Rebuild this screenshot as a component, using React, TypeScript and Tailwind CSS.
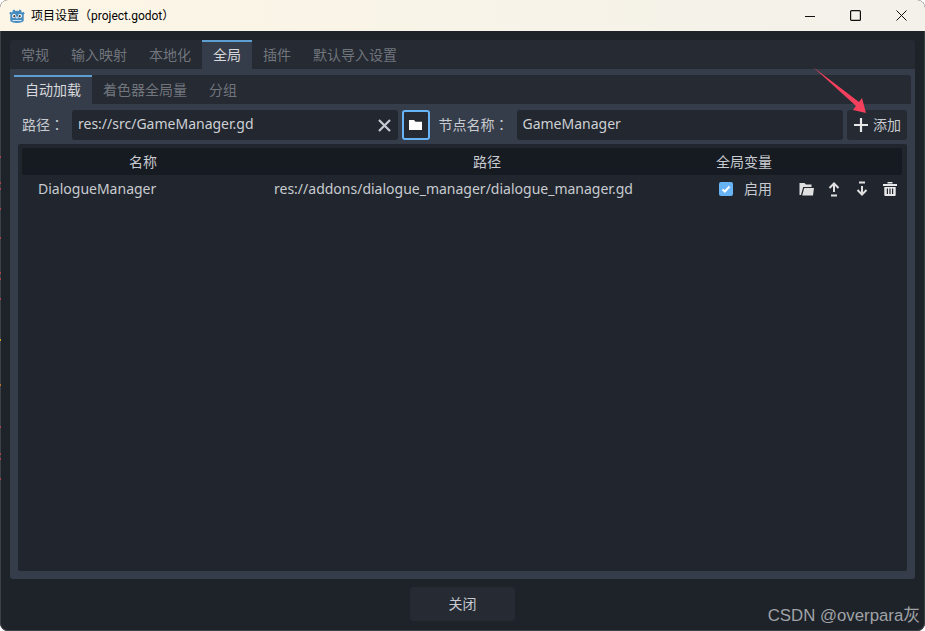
const topTabs = ["常规", "输入映射", "本地化", "全局", "插件", "默认导入设置"];
const subTabs = ["自动加载", "着色器全局量", "分组"];
const edgeMarks = [
  { y: 156, color: "#a8444c" },
  { y: 182, color: "#a8444c" },
  { y: 188, color: "#a8444c" },
  { y: 208, color: "#a8444c" },
  { y: 237, color: "#a8444c" },
  { y: 272, color: "#a8444c" },
  { y: 278, color: "#a8444c" },
  { y: 298, color: "#a8444c" },
  { y: 339, color: "#c9a227" },
  { y: 384, color: "#b8752a" },
  { y: 426, color: "#a8444c" },
  { y: 453, color: "#a8444c" },
  { y: 458, color: "#a8444c" },
  { y: 478, color: "#a8444c" },
];

function GodotLogo() {
  return (
    <svg width="16" height="16" viewBox="0 0 16 16">
      <path
        d="M5.500 1.500 6.300 3a8 8 0 0 1 3.400 0l.8-1.500 1.800.7.100 1.700.9.700 1.300-.9 1.100 1.500-1 1.200V13c-1.500 1.200-3.500 2-6.700 2S2.800 14.200 1.300 13V6.400L.3 5.200l1.100-1.500 1.300.9.900-.7.100-1.700z"
        fill="#478cbf"
      />
      <circle cx="5" cy="8" r="2" fill="#fff" />
      <circle cx="11" cy="8" r="2" fill="#fff" />
      <circle cx="5.300" cy="8.200" r="1.100" fill="#414042" />
      <circle cx="10.700" cy="8.200" r="1.100" fill="#414042" />
      <rect x="7.300" y="8.500" width="1.400" height="2" fill="#fff" />
      <path d="M3.500 12h9v.9h-9z" fill="#d5e6f3" />
    </svg>
  );
}

function FolderClosed() {
  return (
    <svg width="15" height="14" viewBox="0 0 15 14" fill="#fff">
      <path d="M1 2h5l1.500 1.800H14V12H1z" />
    </svg>
  );
}

function FolderOpen() {
  return (
    <svg width="15" height="14" viewBox="0 0 15 14" fill="#e0e0e0">
      <path d="M.5 1h5l1.500 1.500h5.500V5H4.200L2 13H.5zM5.200 6H15l-1 7.500H3.200z" />
    </svg>
  );
}

function ArrowUp() {
  return (
    <svg width="14" height="16" viewBox="0 0 14 16" fill="none" stroke="#e0e0e0" strokeWidth="2">
      <path d="M7 11V2.500M2.500 7 7 2.500 11.500 7M4 14.500h6" />
    </svg>
  );
}

function ArrowDown() {
  return (
    <svg width="14" height="16" viewBox="0 0 14 16" fill="none" stroke="#e0e0e0" strokeWidth="2">
      <path d="M7 5v8.500M2.500 9 7 13.500 11.500 9M4 1.500h6" />
    </svg>
  );
}

function Trash() {
  return (
    <svg width="14" height="14" viewBox="0 0 14 14" fill="#e8e8e8">
      <path
        d="M0 2h14v2H0zM4.500 0h5v1.500h-5zM1.300 5h11.400v8a1 1 0 0 1-1 1H2.300a1 1 0 0 1-1-1zM3.800 6.500v5.500H5V6.500zM6.400 6.500v5.500h1.200V6.500zM9 6.500v5.500h1.200V6.500z"
        fillRule="evenodd"
      />
    </svg>
  );
}

function App() {
  return (
    <div className="relative flex h-[631px] w-[925px] flex-col overflow-hidden rounded-lg bg-[#1e2229] font-['Noto_Sans','Noto_Sans_CJK_SC',sans-serif] text-[14px] text-[#c8cbd0] shadow-[inset_0_0_0_1px_#3c4047]">
      <div className="flex h-[31px] shrink-0 items-center bg-gradient-to-r from-[#fdf6e6] to-[#f3f1ea] font-['Roboto','Noto_Sans_CJK_SC',sans-serif] text-black">
        <div className="ml-[9px] mr-[6px]">
          <GodotLogo />
        </div>
        <span className="text-[12px]">项目设置（project.godot）</span>
        <div className="ml-auto flex items-center pr-[1.500px]">
          <div className="flex w-[45px] justify-center">
            <svg width="10" height="10" viewBox="0 0 10 10" stroke="#111">
              <path d="M0 5.500h10" />
            </svg>
          </div>
          <div className="flex w-[45px] justify-center">
            <svg width="11" height="11" viewBox="0 0 11 11" fill="none" stroke="#111" strokeWidth="1.200">
              <rect x=".6" y=".6" width="9.800" height="9.800" rx="1" />
            </svg>
          </div>
          <div className="ml-[1px] flex w-[45px] justify-center">
            <svg width="11" height="11" viewBox="0 0 11 11" stroke="#111">
              <path d="m.5.500 10 10M10.500.500l-10 10" />
            </svg>
          </div>
        </div>
      </div>

      <div className="mx-[10px] mt-[9px] flex h-[29px] shrink-0 items-stretch rounded-t-[3px] bg-[#252a33] text-[#71757c]">
        {topTabs.map((tab) => (
          <div
            key={tab}
            className={
              tab === "全局"
                ? "border-t-2 border-[#5d9fd2] bg-[#363d4a] px-[11px] pt-[2px] text-[#d6d8db]"
                : "px-[11px] pt-[4px]"
            }
          >
            {tab}
          </div>
        ))}
      </div>

      <div className="mx-[10px] flex h-[510px] shrink-0 flex-col rounded-b-[3px] bg-[#363d4a] px-[4px] pt-[6px]">
        <div className="flex h-[29px] shrink-0 items-stretch rounded-t-[3px] bg-[#252a33] text-[#71757c]">
          {subTabs.map((tab) => (
            <div
              key={tab}
              className={
                tab === "自动加载"
                  ? "border-t-2 border-[#5d9fd2] bg-[#363d4a] px-[11px] pt-[2px] text-[#d6d8db]"
                  : "px-[11px] pt-[4px]"
              }
            >
              {tab}
            </div>
          ))}
        </div>

        <div className="mt-[6px] flex h-[30px] shrink-0 items-center pl-[8px] pr-[4px]">
          <span className="mr-[8px] whitespace-nowrap pb-[1px]">
            路径<span className="font-['Noto_Sans_CJK_TC']">：</span>
          </span>
          <div className="flex h-[30px] w-[326px] items-center justify-between rounded-[3px] bg-[#222730] pl-[6px] pr-[7px] text-[#ced0d4]">
            <span className="pb-[3px]">res://src/GameManager.gd</span>
            <svg width="13" height="13" viewBox="0 0 13 13" stroke="#c8cbd0" strokeWidth="2.200">
              <path d="m1 1 11 11M12 1 1 12" />
            </svg>
          </div>
          <div className="ml-[4px] flex h-[30px] w-[28px] items-center justify-center rounded-[3px] border-2 border-[#66b3f5] bg-[#252a33]">
            <FolderClosed />
          </div>
          <span className="ml-[8px] w-[79px] whitespace-nowrap pb-[1px] pl-[1px]">
            节点名称<span className="font-['Noto_Sans_CJK_TC']">：</span>
          </span>
          <div className="ml-[1px] flex h-[30px] w-[326px] items-center rounded-[3px] bg-[#222730] pb-[3px] pl-[5px] text-[#ced0d4]">
            GameManager
          </div>
          <div className="ml-[4px] flex h-[30px] w-[60px] items-center rounded-[3px] bg-[#252a33] pl-[6px]">
            <svg width="16" height="16" viewBox="0 0 16 16" stroke="#e8e8e8" strokeWidth="2.200">
              <path d="M8 1v14M1 8h14" />
            </svg>
            <span className="ml-[4px] pb-[1px]">添加</span>
          </div>
        </div>

        <div className="mx-[4px] mb-[8px] mt-[4px] flex-1 rounded-[2px] bg-[#21262e] p-[4px] pr-[5px]">
          <div className="grid h-[27px] grid-cols-[242px_446px_68px_1fr] items-center rounded-[2px] bg-[#161a21] text-center">
            <span>名称</span>
            <span>路径</span>
            <span>全局变量</span>
            <span />
          </div>
          <div className="grid h-[28px] grid-cols-[242px_446px_68px_1fr] items-center">
            <span className="pb-[2px] pl-[16px]">DialogueManager</span>
            <span className="pb-[2px] pl-[10px]">res://addons/dialogue_manager/dialogue_manager.gd</span>
            <div className="flex items-center pl-[9px]">
              <div className="flex h-[14px] w-[14px] shrink-0 items-center justify-center rounded-[2px] bg-[#66b3f5]">
                <svg width="10" height="10" viewBox="0 0 10 10" fill="none" stroke="#fff" strokeWidth="2">
                  <path d="m1.500 5.500 2.300 2L8.500 2.500" />
                </svg>
              </div>
              <span className="ml-[11px] whitespace-nowrap pb-[2px]">启用</span>
            </div>
            <div className="flex items-center pl-[14px]">
              <div className="flex w-[28px] shrink-0 justify-center">
                <FolderOpen />
              </div>
              <div className="flex w-[28px] shrink-0 justify-center">
                <ArrowUp />
              </div>
              <div className="flex w-[28px] shrink-0 justify-center">
                <ArrowDown />
              </div>
              <div className="flex w-[28px] shrink-0 justify-center">
                <Trash />
              </div>
            </div>
          </div>
        </div>
      </div>

      <div className="relative flex flex-1 items-start justify-center pt-[8px]">
        <div className="flex h-[34px] w-[105px] items-center justify-center rounded-[3px] bg-[#252a33] pb-[1px]">关闭</div>
        <span className="absolute bottom-[3px] right-[5px] font-['Liberation_Sans','Noto_Sans_CJK_SC',sans-serif] text-[16.800px] text-[#a0a2a6]">
          CSDN @overpara灰
        </span>
      </div>

      {edgeMarks.map((mark) => (
        <div
          key={mark.y}
          className="absolute left-0 h-[2px] w-[1px]"
          style={{ top: mark.y, backgroundColor: mark.color }}
        />
      ))}

      <svg className="absolute left-[812px] top-[66px]" width="56" height="50" viewBox="0 0 56 50">
        <path d="M1 1 47 36 50 32 54 47 41 44 44 40z" fill="#f4405c" />
      </svg>
    </div>
  );
}

export default App;
